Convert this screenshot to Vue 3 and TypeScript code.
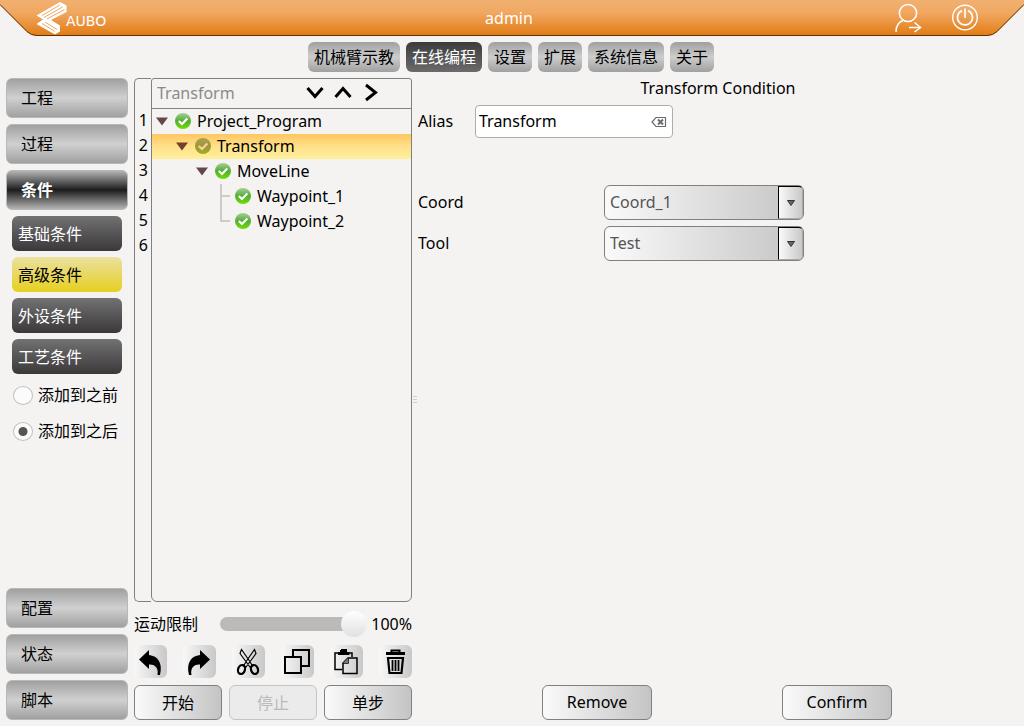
<script setup lang="ts">
import { ref } from 'vue'

interface TreeRow {
  label: string
  depth: number
  branch: boolean
  selected?: boolean
  last?: boolean
}

const tabs = ['机械臂示教', '在线编程', '设置', '扩展', '系统信息', '关于']
const activeTab = ref('在线编程')

const topMenu = ['工程', '过程', '条件']
const bottomMenu = ['配置', '状态', '脚本']
const activeMenu = ref('条件')

const conditions = ['基础条件', '高级条件', '外设条件', '工艺条件']
const activeCondition = ref('高级条件')
const insertPosition = ref('after')

const rows: TreeRow[] = [
  { label: 'Project_Program', depth: 0, branch: true },
  { label: 'Transform', depth: 1, branch: true, selected: true },
  { label: 'MoveLine', depth: 2, branch: true },
  { label: 'Waypoint_1', depth: 3, branch: false },
  { label: 'Waypoint_2', depth: 3, branch: false, last: true },
]

const speed = ref(100)
const alias = ref('Transform')
const coord = ref('Coord_1')
const tool = ref('Test')
</script>

<template>
  <div class="page">
    <header class="banner">
      <svg class="corner" viewBox="0 0 40 36" aria-hidden="true">
        <defs>
          <linearGradient id="orange" x1="0" y1="0" x2="0" y2="1">
            <stop offset="0" stop-color="#f0b070" />
            <stop offset=".35" stop-color="#f1a862" />
            <stop offset="1" stop-color="#e27c16" />
          </linearGradient>
        </defs>
        <path d="M0 0H40V36H37Q31 35.500 27 32L0 5Z" fill="url(#orange)" />
        <path d="M0 4.500L27 31.500Q31 35.500 37 35.500H40" fill="none" stroke="#5c3008" />
      </svg>
      <div class="banner-body">
        <div class="brand">
          <svg class="logo" viewBox="35 1 33 34" aria-hidden="true">
            <path d="M60 2L36.500 15.500L43 19.500L36.500 24L55 34.500L60 31.500V25.500L51 20L66.500 12V5.500Z" fill="#fff" />
            <path d="M60 5L42 15.500M62.500 7L44 17.500M64.500 9.500L47 19M42 23.500L55 31.500M45 22L57 29.500" fill="none" stroke="#ed9d4e" stroke-width=".9" />
          </svg>
          <span class="brand-name">AUBO</span>
        </div>
        <span class="user">admin</span>
        <div class="session">
          <button class="icon-button" aria-label="Switch user">
            <svg width="28" height="30" viewBox="0 0 28 30" fill="none" stroke="#fff" stroke-width="1.500">
              <circle cx="14" cy="10" r="8.600" />
              <path d="M2 29C2 22.500 5 19 9 17.500M15 24.500H26M20.500 19.500L26.500 24.500L20.500 29" />
            </svg>
          </button>
          <button class="icon-button" aria-label="Power">
            <svg width="28" height="28" viewBox="0 0 28 28" fill="none" stroke="#fff">
              <circle cx="14" cy="13.500" r="12.300" stroke-width="1.400" />
              <path d="M11 6.600A7.500 7.500 0 1 0 17 6.600" stroke-width="1.700" />
              <path d="M14 4.500V14" stroke-width="1.700" />
            </svg>
          </button>
        </div>
      </div>
      <svg class="corner" viewBox="0 0 40 36" aria-hidden="true">
        <path d="M40 0H0V36H3Q9 35.500 13 32L40 5Z" fill="url(#orange)" />
        <path d="M40 4.500L13 31.500Q9 35.500 3 35.500H0" fill="none" stroke="#5c3008" />
      </svg>
    </header>

    <nav class="tabs">
      <button v-for="t in tabs" :key="t" class="tab" :class="{ active: t === activeTab }" @click="activeTab = t">{{ t }}</button>
    </nav>

    <div class="workspace">
      <aside class="sidebar">
        <button v-for="m in topMenu" :key="m" class="menu" :class="{ active: m === activeMenu }" @click="activeMenu = m">{{ m }}</button>
        <div class="submenu">
          <button v-for="c in conditions" :key="c" class="sub" :class="{ active: c === activeCondition }" @click="activeCondition = c">{{ c }}</button>
        </div>
        <div class="radios">
          <label class="radio"><input v-model="insertPosition" type="radio" name="position" value="before" />添加到之前</label>
          <label class="radio"><input v-model="insertPosition" type="radio" name="position" value="after" />添加到之后</label>
        </div>
        <div class="menu-end">
          <button v-for="m in bottomMenu" :key="m" class="menu" :class="{ active: m === activeMenu }" @click="activeMenu = m">{{ m }}</button>
        </div>
      </aside>

      <section class="program">
        <div class="editor">
          <div class="gutter">
            <span v-for="n in 6" :key="n" class="line-number">{{ n }}</span>
          </div>
          <div class="tree-panel">
            <div class="search">
              <input class="search-input" type="text" placeholder="Transform" aria-label="Search" />
              <button class="icon-button" aria-label="Next">
                <svg width="20" height="20" viewBox="0 0 20 20" class="chevron"><path d="M2.500 5L10 13.500L17.500 5" /></svg>
              </button>
              <button class="icon-button" aria-label="Previous">
                <svg width="20" height="20" viewBox="0 0 20 20" class="chevron"><path d="M2.500 14L10 5.500L17.500 14" /></svg>
              </button>
              <button class="icon-button" aria-label="Go">
                <svg width="20" height="20" viewBox="0 0 20 20" class="chevron"><path d="M5 2L14.500 9.500L5 17" /></svg>
              </button>
            </div>
            <ul class="tree" role="tree">
              <li v-for="r in rows" :key="r.label" class="row" :class="['depth-' + r.depth, { selected: r.selected }]" role="treeitem">
                <svg v-if="r.branch" class="toggle" width="12" height="25" viewBox="0 0 12 25" aria-hidden="true">
                  <path d="M0 8.500H12L6 16.500Z" :fill="r.selected ? '#74402c' : '#65494a'" />
                </svg>
                <svg v-else class="toggle" width="12" height="25" viewBox="0 0 12 25" fill="none" stroke="#cfcac6" stroke-width="2" aria-hidden="true">
                  <path :d="r.last ? 'M3 0V12H12' : 'M3 0V25M3 12H12'" />
                </svg>
                <svg class="status" width="16" height="16" viewBox="0 0 16 16" aria-hidden="true">
                  <defs>
                    <linearGradient :id="'ok-' + r.label" x1="0" y1="0" x2="0" y2="1">
                      <stop offset="0" :stop-color="r.selected ? '#ad9e58' : '#a9cf9a'" />
                      <stop offset=".5" :stop-color="r.selected ? '#a09635' : '#52ad32'" />
                      <stop offset="1" :stop-color="r.selected ? '#a3ad20' : '#6ee000'" />
                    </linearGradient>
                  </defs>
                  <circle cx="8" cy="8" r="8" :fill="'url(#ok-' + r.label + ')'" />
                  <path d="M3.800 8L7 11L12.300 5.500" fill="none" :stroke="r.selected ? '#f7d5a5' : '#fff'" stroke-width="2.200" />
                </svg>
                <span>{{ r.label }}</span>
              </li>
            </ul>
          </div>
        </div>

        <div class="speed">
          <label for="speed">运动限制</label>
          <input id="speed" v-model="speed" class="slider" type="range" min="0" max="100" />
          <output for="speed">{{ speed }}%</output>
        </div>

        <div class="tools">
          <button class="tool" aria-label="Undo">
            <svg width="32" height="32" viewBox="0 0 32 32"><path d="M5 13.500L15 4V9C24 10 29 17 26 29H23.500C25 21 20 18 15 18.500V23Z" /></svg>
          </button>
          <button class="tool" aria-label="Redo">
            <svg width="32" height="32" viewBox="0 0 32 32"><path d="M27 13.500L17 4V9C8 10 3 17 6 29H8.500C7 21 12 18 17 18.500V23Z" /></svg>
          </button>
          <button class="tool" aria-label="Cut">
            <svg width="32" height="32" viewBox="0 0 32 32" fill="none" stroke="#000">
              <ellipse cx="9.500" cy="23.500" rx="3.400" ry="4.600" stroke-width="2.200" transform="rotate(18 9.500 23.500)" />
              <ellipse cx="22.500" cy="23.500" rx="3.400" ry="4.600" stroke-width="2.200" transform="rotate(-18 22.500 23.500)" />
              <path d="M8 7.500L9.500 3.500L17.500 15L20.500 20L18 21L15 17ZM24 7.500L22.500 3.500L14.500 15L11.500 20L14 21L17 17Z" stroke-width="1.200" />
            </svg>
          </button>
          <button class="tool" aria-label="Copy">
            <svg width="32" height="32" viewBox="0 0 32 32" fill="none" stroke="#000" stroke-width="2">
              <path d="M4 11H20V27H4ZM12 11V4H28V20H21" />
            </svg>
          </button>
          <button class="tool" aria-label="Paste">
            <svg width="32" height="32" viewBox="0 0 32 32" fill="none" stroke="#000" stroke-width="1.500">
              <path d="M12 23.500H5V7H9M19 7H22V11" />
              <path d="M8 9V6H10V4H17V6H19.500V9Z" fill="#000" stroke="none" />
              <path d="M12 5V4H16V5" stroke-width="2" />
              <path d="M18 12H27V27.500H13V17ZM13 17H18V12" />
              <path d="M13 17L18 12V17Z" fill="#777" stroke="none" />
            </svg>
          </button>
          <button class="tool" aria-label="Delete">
            <svg width="32" height="32" viewBox="0 0 32 32" fill="none" stroke="#000">
              <path d="M7 7.500H26" stroke-width="3" />
              <path d="M12.500 7V4.500H20.500V7" stroke-width="2" />
              <path d="M9 12H24L22.500 27H10.500Z" stroke-width="2.200" />
              <path d="M13.500 14V25M16.500 14V25M19.500 14V25" stroke-width="1.800" />
            </svg>
          </button>
        </div>

        <div class="run">
          <button class="push">开始</button>
          <button class="push" disabled>停止</button>
          <button class="push">单步</button>
        </div>
      </section>

      <div class="grip" aria-hidden="true"><i></i><i></i><i></i></div>

      <main class="detail">
        <h1 class="title">Transform Condition</h1>
        <form class="form" @submit.prevent>
          <div class="alias">
            <label for="alias">Alias</label>
            <div class="alias-box">
              <input id="alias" v-model="alias" type="text" />
              <button type="button" class="icon-button" aria-label="Clear" @click="alias = ''">
                <svg width="16" height="12" viewBox="0 0 16 12" fill="none" stroke="#6b6b6b">
                  <path d="M5 1.500H14.500V10.500H5L1 6Z" stroke-width="1.200" />
                  <path d="M7 3.500L12 8.500M12 3.500L7 8.500" stroke-width="2" />
                </svg>
              </button>
            </div>
          </div>
          <div class="fields">
            <label for="coord">Coord</label>
            <div class="combo">
              <select id="coord" v-model="coord"><option>Coord_1</option></select>
              <span class="drop"><svg width="8" height="6" viewBox="0 0 8 6"><path d="M.5 .5H7.500L4 5.500Z" fill="#666" stroke="#333" /></svg></span>
            </div>
            <label for="tool">Tool</label>
            <div class="combo">
              <select id="tool" v-model="tool"><option>Test</option></select>
              <span class="drop"><svg width="8" height="6" viewBox="0 0 8 6"><path d="M.5 .5H7.500L4 5.500Z" fill="#666" stroke="#333" /></svg></span>
            </div>
          </div>
        </form>
        <div class="actions">
          <button class="push wide">Remove</button>
          <button class="push wide">Confirm</button>
        </div>
      </main>
    </div>
  </div>
</template>

<style>
body {
  background: #f4f3f2;
}
</style>

<style scoped>
.page {
  display: flex;
  flex-direction: column;
  box-sizing: border-box;
  min-height: 100vh;
  padding-bottom: 6px;
  background: #f4f3f2;
  color: #000;
  font: 16px/24px "Noto Sans", "Noto Sans CJK SC", sans-serif;
}
.page *,
.page *::before {
  box-sizing: border-box;
}
button,
input,
select {
  margin: 0;
  padding: 0;
  border: 0;
  color: inherit;
  font: inherit;
}
svg {
  display: block;
  flex: none;
}
.icon-button {
  background: none;
}

/* Banner */
.banner {
  display: flex;
  height: 36px;
  color: #fff;
}
.corner {
  width: 40px;
  height: 36px;
}
.banner-body {
  flex: 1;
  display: grid;
  grid-template-columns: 1fr auto 1fr;
  align-items: center;
  border-bottom: 1px solid #5c3008;
  background: linear-gradient(#f0b070, #f1a862 35%, #e27c16);
}
.brand {
  display: flex;
  align-items: center;
}
.logo {
  width: 33px;
  height: 34px;
  margin: 0 -2px 0 -5px;
}
.brand-name {
  padding-top: 7px;
  font-family: "DejaVu Sans", sans-serif;
  font-size: 14px;
  line-height: 20px;
}
.user {
  padding-right: 6px;
}
.session {
  display: flex;
  justify-content: flex-end;
  align-items: center;
  gap: 29px;
  padding-right: 5px;
}

/* Tabs */
.tabs {
  display: flex;
  justify-content: center;
  gap: 6px;
  padding: 6px 2px 6px 0;
}
.tab {
  height: 30px;
  padding: 0 6px;
  border-radius: 6px;
  background: linear-gradient(#a0a0a0, #cdcdcd 50%, #a0a0a0);
}
.tab.active {
  background: linear-gradient(#3c3c3c, #6c6a6a);
  color: #fff;
}

/* Workspace */
.workspace {
  flex: 1;
  display: flex;
  padding-left: 6px;
}
.sidebar {
  width: 122px;
  display: flex;
  flex-direction: column;
  gap: 6px;
}
.menu {
  height: 40px;
  padding-left: 14px;
  border: 1px solid #b8b8b8;
  border-radius: 6px;
  background: linear-gradient(#a0a0a0, #d0d0d0 50%, #a0a0a0);
  text-align: left;
}
.menu.active {
  background: linear-gradient(#b4b4b4, #1c1c1c 50%, #b4b4b4);
  color: #fff;
  font-weight: 700;
}
.submenu {
  display: flex;
  flex-direction: column;
  gap: 6px;
  padding: 0 6px;
}
.sub {
  height: 35px;
  padding-left: 6px;
  border-radius: 6px;
  background: linear-gradient(#727273, #3b383a);
  color: #fff;
  text-align: left;
}
.sub.active {
  background: linear-gradient(#ebe0a0, #e6d020);
  color: #000;
}
.radios {
  display: flex;
  flex-direction: column;
  gap: 12px;
  padding: 3px 0 0 7px;
}
.radio {
  display: flex;
  align-items: center;
  gap: 5px;
  white-space: nowrap;
}
.radio input {
  appearance: none;
  width: 20px;
  height: 19px;
  border: 1px solid #c4c0bc;
  border-radius: 50%;
  background: #fbfbfb;
}
.radio input:checked {
  background: radial-gradient(circle, #555 4px, #fbfbfb 5px);
}
.menu-end {
  display: flex;
  flex-direction: column;
  gap: 6px;
  margin-top: auto;
}

/* Program tree */
.program {
  width: 278px;
  display: flex;
  flex: none;
  flex-direction: column;
  margin-left: 6px;
}
.editor {
  flex: 1;
  display: flex;
}
.gutter {
  flex: none;
  width: 17px;
  display: flex;
  flex-direction: column;
  padding-top: 29px;
  border: 1px solid #808080;
  border-right: 0;
  border-radius: 5px 0 0 5px;
}
.line-number {
  height: 25px;
  padding-right: 3px;
  text-align: right;
}
.tree-panel {
  flex: 1;
  min-width: 0;
  border: 1px solid #808080;
  border-radius: 3px 3px 6px 6px;
}
.search {
  display: flex;
  align-items: center;
  gap: 8px;
  height: 30px;
  padding: 0 30px 1px 5px;
  border-bottom: 1px solid #808080;
}
.search-input {
  flex: 1;
  min-width: 0;
  background: none;
}
.search-input::placeholder {
  color: #8a8a8a;
  opacity: 1;
}
.chevron {
  fill: none;
  stroke: #000;
  stroke-width: 3;
}
.tree {
  margin: 0;
  padding: 0;
  list-style: none;
}
.row {
  display: flex;
  align-items: center;
  height: 25px;
  padding-bottom: 1px;
  padding-left: 4px;
}
.row.selected {
  background: linear-gradient(#ffc65f, #ffe18a 50%, #fff09c);
}
.depth-1 {
  padding-left: 24px;
}
.depth-2 {
  padding-left: 44px;
}
.depth-3 {
  padding-left: 64px;
}
.depth-3 .toggle {
  margin-left: 2px;
  margin-right: 5px;
}
.toggle {
  margin-right: 7px;
}
.status {
  margin-right: 6px;
}

/* Speed and tools */
.speed {
  display: flex;
  align-items: center;
  justify-content: space-between;
  height: 43px;
}
.slider {
  appearance: none;
  width: 147px;
  height: 26px;
  margin-left: 17px;
  background: none;
}
.slider::-webkit-slider-runnable-track {
  height: 14px;
  border-radius: 7px;
  background: linear-gradient(to right, #bababa 135px, transparent 135px);
}
.slider::-webkit-slider-thumb {
  appearance: none;
  width: 26px;
  height: 26px;
  margin-top: -6px;
  border-radius: 50%;
  background: linear-gradient(#fff, #e0e0e0);
}
.tools {
  display: flex;
  justify-content: space-between;
}
.tool {
  width: 33px;
  height: 33px;
  border-radius: 6px;
  background: linear-gradient(to right, #f8f8f8, #c8c8c8);
}
.run {
  display: flex;
  justify-content: space-between;
  padding-top: 7px;
}
.push {
  width: 88px;
  height: 35px;
  border: 1px solid #808080;
  border-radius: 6px;
  background: linear-gradient(to right, #fafafa, #c4c4c4);
}
.push:disabled {
  border-color: #c4c4c4;
  background: #ebebeb;
  color: #bababa;
}
.push.wide {
  width: 110px;
  padding-bottom: 2px;
}
.grip {
  display: flex;
  flex-direction: column;
  justify-content: center;
  gap: 2px;
  width: 6px;
}
.grip i {
  width: 4px;
  height: 1px;
  margin-left: 1px;
  background: #d3cdc6;
}

/* Detail */
.detail {
  flex: 1;
  display: flex;
  flex-direction: column;
}
.title {
  margin: 0;
  padding-right: 6px;
  font: inherit;
  line-height: 20px;
  text-align: center;
}
.form {
  flex: 1;
  padding-top: 7px;
}
.alias {
  display: flex;
  align-items: center;
}
.alias label {
  width: 57px;
}
.form label {
  padding-bottom: 2px;
}
.alias-box {
  display: flex;
  align-items: center;
  width: 198px;
  height: 33px;
  padding: 0 5px 0 3px;
  border: 1px solid #b3aca5;
  border-radius: 4px;
  background: #fff;
}
.alias-box input {
  flex: 1;
  min-width: 0;
  padding-bottom: 2px;
  background: none;
}
.fields {
  display: grid;
  grid-template-columns: 186px 200px;
  gap: 6px 0;
  align-items: center;
  padding-top: 47px;
}
.combo {
  display: grid;
  grid-template-columns: 1fr 26px;
  height: 35px;
}
.combo select {
  grid-area: 1 / 1 / 2 / 3;
  appearance: none;
  padding: 0 0 2px 5px;
  border: 1px solid #808080;
  border-radius: 6px;
  background: linear-gradient(to right, #fafafa, #c4c4c4);
  color: #555;
}
.drop {
  grid-area: 1 / 2 / 2 / 3;
  display: flex;
  align-items: center;
  justify-content: center;
  margin: 1px 1px 1px 0;
  border: 1px solid #000;
  border-right-color: #aaa;
  border-bottom-color: #aaa;
  border-radius: 0 4px 4px 0;
  background: linear-gradient(to right, #fafafa, #c8c8c8);
  pointer-events: none;
}
.actions {
  display: flex;
  justify-content: space-evenly;
  margin-left: -6px;
  padding-right: 2px;
}
</style>
